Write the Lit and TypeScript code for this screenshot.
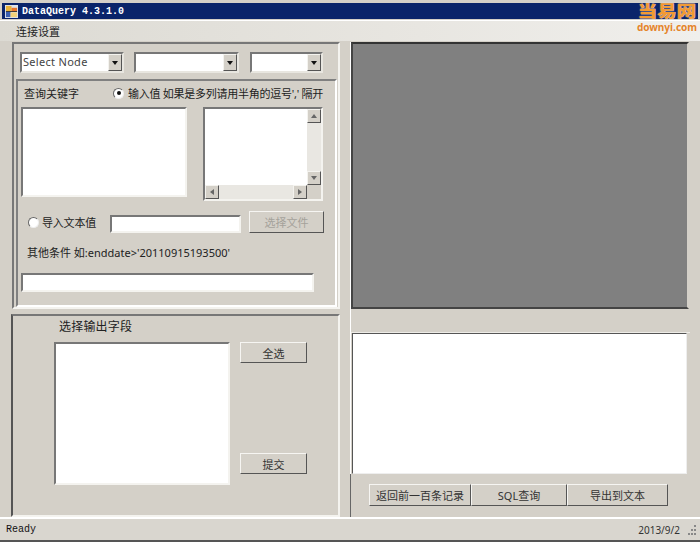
import { LitElement, html, css } from "lit";
import { customElement } from "lit/decorators.js";

@customElement("app-root")
export class AppRoot extends LitElement {
  static styles = css`
    :host { display: block; width: 700px; height: 542px; overflow: hidden; position: relative;
      background: #d4d0c8; font: 11px "Noto Sans","Noto Sans CJK SC",sans-serif; color: #222; box-sizing: border-box; }
    * { box-sizing: border-box; }
    .win { height: 542px; display: flex; flex-direction: column; border-bottom: 2px solid #555; border-top: 3px solid #d4d0c8; }
    .title { height: 16px; margin: 0 2px; background: #0a246a; display: flex; align-items: center; gap: 4px; padding-left: 3px;
      color: #fff; font: bold 10px "Liberation Mono", monospace; }
    .title svg { flex: none; }
    .menu { height: 21px; margin-top: 1px; padding: 3px 0 0 16px; font-size: 11px; line-height: 15px;
      background: linear-gradient(90deg, #dcdad3, #e8e6e1 60%, #f0efec); border-top: 1px solid #fff; }
    .main { flex: 1; display: flex; padding: 1px 10px 0 11px; gap: 10px; border-bottom: 1px solid #fff; height: 477px; }
    .left { width: 329px; display: flex; flex-direction: column; gap: 5px; }
    .right { width: 340px; display: flex; flex-direction: column; border-left: 1px solid #fff; }
    .sunken { border: 2px solid; border-color: #777 #f4f3ef #f4f3ef #777; }
    .etched { border: 2px solid; border-color: #808080 #fff #fff #808080; }
    .top { height: 267px; margin-left: 1px; width: 328px; padding: 8px 5px 0 1px; }
    .combos { display: flex; margin-left: 5px; height: 21px; }
    .combo { height: 21px; background: #fff; position: relative; padding: 0 0 0 1px; font-size: 11px; line-height: 15px; letter-spacing: .3px; color: #444;
      border: 2px solid; border-color: #777 #e8e6e0 #e8e6e0 #777; }
    .c1 { width: 104px; margin-right: 10px; } .c2 { width: 105px; margin-right: 11px; } .c3 { width: 73px; }
    .arrow { position: absolute; right: 0; top: 0; bottom: 0; width: 14px; background: #d4d0c8;
      border: 1px solid; border-color: #f4f3ef #555 #555 #f4f3ef; display: flex; align-items: center; justify-content: center; }
    .arrow i { width: 0; height: 0; border: 3.5px solid transparent; border-top: 4px solid #111; border-bottom: 0; display: block; }
    .inner { margin: 6px 0 0 1px; height: 228px; width: 321px; padding: 0 0 0 3px; border-width: 2px; }
    .row1 { display: flex; height: 26px; align-items: center; padding: 0 0 2px 3px; white-space: nowrap; }
    .radio { width: 11px; height: 11px; border-radius: 50%; background: #fff; border: 1px solid; border-color: #666 #eee #eee #666; flex: none; position: relative; }
    .radio.on::after { content: ""; position: absolute; left: 2.5px; top: 2.5px; width: 4px; height: 4px; border-radius: 50%; background: #111; }
    .q { width: 89px; } .hint { margin-left: 4px; letter-spacing: -.25px; }
    .lists { display: flex; height: 94px; align-items: flex-start; }
    .l1 { width: 166px; height: 90px; background: #fff; margin-right: 16px; }
    .l2 { width: 120px; height: 94px; background: #fff; position: relative; }
    .sb { position: absolute; background: #e9e7e2; }
    .sbv { right: 0; top: 0; bottom: 14px; width: 14px; display: flex; flex-direction: column; justify-content: space-between; }
    .sbh { left: 0; bottom: 0; right: 14px; height: 14px; display: flex; justify-content: space-between; }
    .corner { position: absolute; right: 0; bottom: 0; width: 14px; height: 14px; background: #d4d0c8; }
    .sbtn { width: 14px; height: 14px; background: #d4d0c8; border: 1px solid; border-color: #f4f3ef #555 #555 #f4f3ef; display: flex; align-items: center; justify-content: center; }
    .t-u { border: 3px solid transparent; border-bottom: 4px solid #666; border-top: 0; }
    .t-d { border: 3px solid transparent; border-top: 4px solid #666; border-bottom: 0; }
    .t-l { border: 3px solid transparent; border-right: 4px solid #666; border-left: 0; }
    .t-r { border: 3px solid transparent; border-left: 4px solid #666; border-right: 0; }
    .row2 { display: flex; align-items: center; height: 22px; margin-top: 10px; padding-left: 7px; }
    .row2 .lb { margin-left: 3px; width: 68px; letter-spacing: -.2px; }
    .txt { background: #fff; height: 18px; }
    .t1 { width: 131px; margin-top: 4px; }
    .btn { background: #d4d0c8; border: 1px solid; border-color: #f6f5f2 #555 #555 #f6f5f2; display: flex; align-items: center; justify-content: center; font-size: 11px; color: #333; }
    .b1 { width: 75px; height: 22px; margin-left: 8px; color: #a5a29b; }
    .cond { margin: 11px 0 0 6px; height: 17px; line-height: 17px; }
    .t2 { width: 293px; height: 19px; margin-top: 12px; }
    .bottom { height: 203px; width: 329px; padding: 2px 0 0 41px; border-color: #777 #f4f3ef #f4f3ef #555; }
    .bt { font-size: 12px; height: 24px; line-height: 16px; padding: 1px 0 0 5px; letter-spacing: .2px; }
    .brow { display: flex; }
    .blist { width: 176px; height: 143px; background: #fff; margin-right: 10px; }
    .bcol { display: flex; flex-direction: column; justify-content: space-between; height: 132px; }
    .bcol .btn { width: 67px; height: 21px; }
    .gray { width: 338px; height: 267px; background: #808080; border: 2px solid; border-color: #333 #d4d0c8 #444 #444; }
    .mid { height: 24px; border-bottom: 1px solid #eeece7; }
    .white { width: 335px; height: 141px; margin-left: 1px; background: #fff; border: solid; border-width: 1px; border-color: #555 #eee #eee #555; }
    .foot { flex: 1; border-left: 1px solid #666; display: flex; padding: 10px 0 0 18px; margin-left: -1px; }
    .foot .btn { height: 22px; }
    .fa { width: 102px; } .fb { width: 96px; } .fc { width: 101px; }
    .status { height: 22px; display: flex; justify-content: space-between; align-items: center; padding: 0 0 0 6px; background: #d9d6cf; border-top: 1px solid #fff; }
    .ready { font: 10px "Liberation Mono", monospace; color: #111; }
    .date { font-size: 10px; display: flex; align-items: center; gap: 7px; color: #333; padding-right: 3px; }
    .logo { position: absolute; right: 2px; top: 1px; width: 62px; height: 34px; text-align: center; font-weight: bold; }
    .logo b { display: block; font-size: 16px; line-height: 21px; color: #f29a33; white-space: nowrap; transform: scaleX(1.22); text-shadow: 0 0 1px #fff; }
    .logo span { display: block; font-size: 10px; line-height: 11px; color: #e5842a; white-space: nowrap; }
  `;

  private combo(cls: string, text = "") {
    return html`<div class="combo ${cls}">${text}<div class="arrow"><i></i></div></div>`;
  }

  render() {
    return html`<div class="win">
      <div class="title">
        <svg width="13" height="13" viewBox="0 0 14 14"><rect width="14" height="14" fill="#dfe3ea"/><rect x="1" y="1" width="6" height="6" fill="#e8b23a"/><rect x="7" y="3" width="6" height="4" fill="#e8762c"/><rect x="1" y="7" width="5" height="6" fill="#3c5fb0"/><rect x="6" y="8" width="7" height="5" fill="#f2d27a"/><path d="M1 7h12" stroke="#333" stroke-width="1"/></svg>
        <span>DataQuery 4.3.1.0</span>
      </div>
      <div class="menu">连接设置</div>
      <div class="main">
        <div class="left">
          <div class="top sunken">
            <div class="combos">
              ${this.combo("c1", "Select Node")}${this.combo("c2")}${this.combo("c3")}
            </div>
            <div class="inner etched">
              <div class="row1">
                <span class="q">查询关键字</span>
                <span class="radio on"></span>
                <span class="hint">输入值 如果是多列请用半角的逗号',' 隔开</span>
              </div>
              <div class="lists">
                <div class="l1 sunken"></div>
                <div class="l2 sunken">
                  <div class="sb sbv"><div class="sbtn"><i class="t-u"></i></div><div class="sbtn"><i class="t-d"></i></div></div>
                  <div class="sb sbh"><div class="sbtn"><i class="t-l"></i></div><div class="sbtn"><i class="t-r"></i></div></div>
                  <div class="corner"></div>
                </div>
              </div>
              <div class="row2">
                <span class="radio"></span><span class="lb">导入文本值</span>
                <div class="txt t1 sunken"></div>
                <div class="btn b1">选择文件</div>
              </div>
              <div class="cond">其他条件 如:enddate&gt;'20110915193500'</div>
              <div class="txt t2 sunken"></div>
            </div>
          </div>
          <div class="bottom sunken">
            <div class="bt">选择输出字段</div>
            <div class="brow">
              <div class="blist sunken"></div>
              <div class="bcol"><div class="btn">全选</div><div class="btn">提交</div></div>
            </div>
          </div>
        </div>
        <div class="right">
          <div class="gray"></div>
          <div class="mid"></div>
          <div class="white"></div>
          <div class="foot">
            <div class="btn fa">返回前一百条记录</div><div class="btn fb">SQL查询</div><div class="btn fc">导出到文本</div>
          </div>
        </div>
      </div>
      <div class="status">
        <span class="ready">Ready</span>
        <span class="date">2013/9/2
          <svg width="10" height="10" viewBox="0 0 10 10" fill="#888"><rect x="7" y="0" width="2" height="2"/><rect x="4" y="4" width="2" height="2"/><rect x="7" y="4" width="2" height="2"/><rect x="1" y="8" width="2" height="2"/><rect x="4" y="8" width="2" height="2"/><rect x="7" y="8" width="2" height="2"/></svg>
        </span>
      </div>
      <div class="logo"><b>当易网</b><span>downyi.com</span></div>
    </div>`;
  }
}
